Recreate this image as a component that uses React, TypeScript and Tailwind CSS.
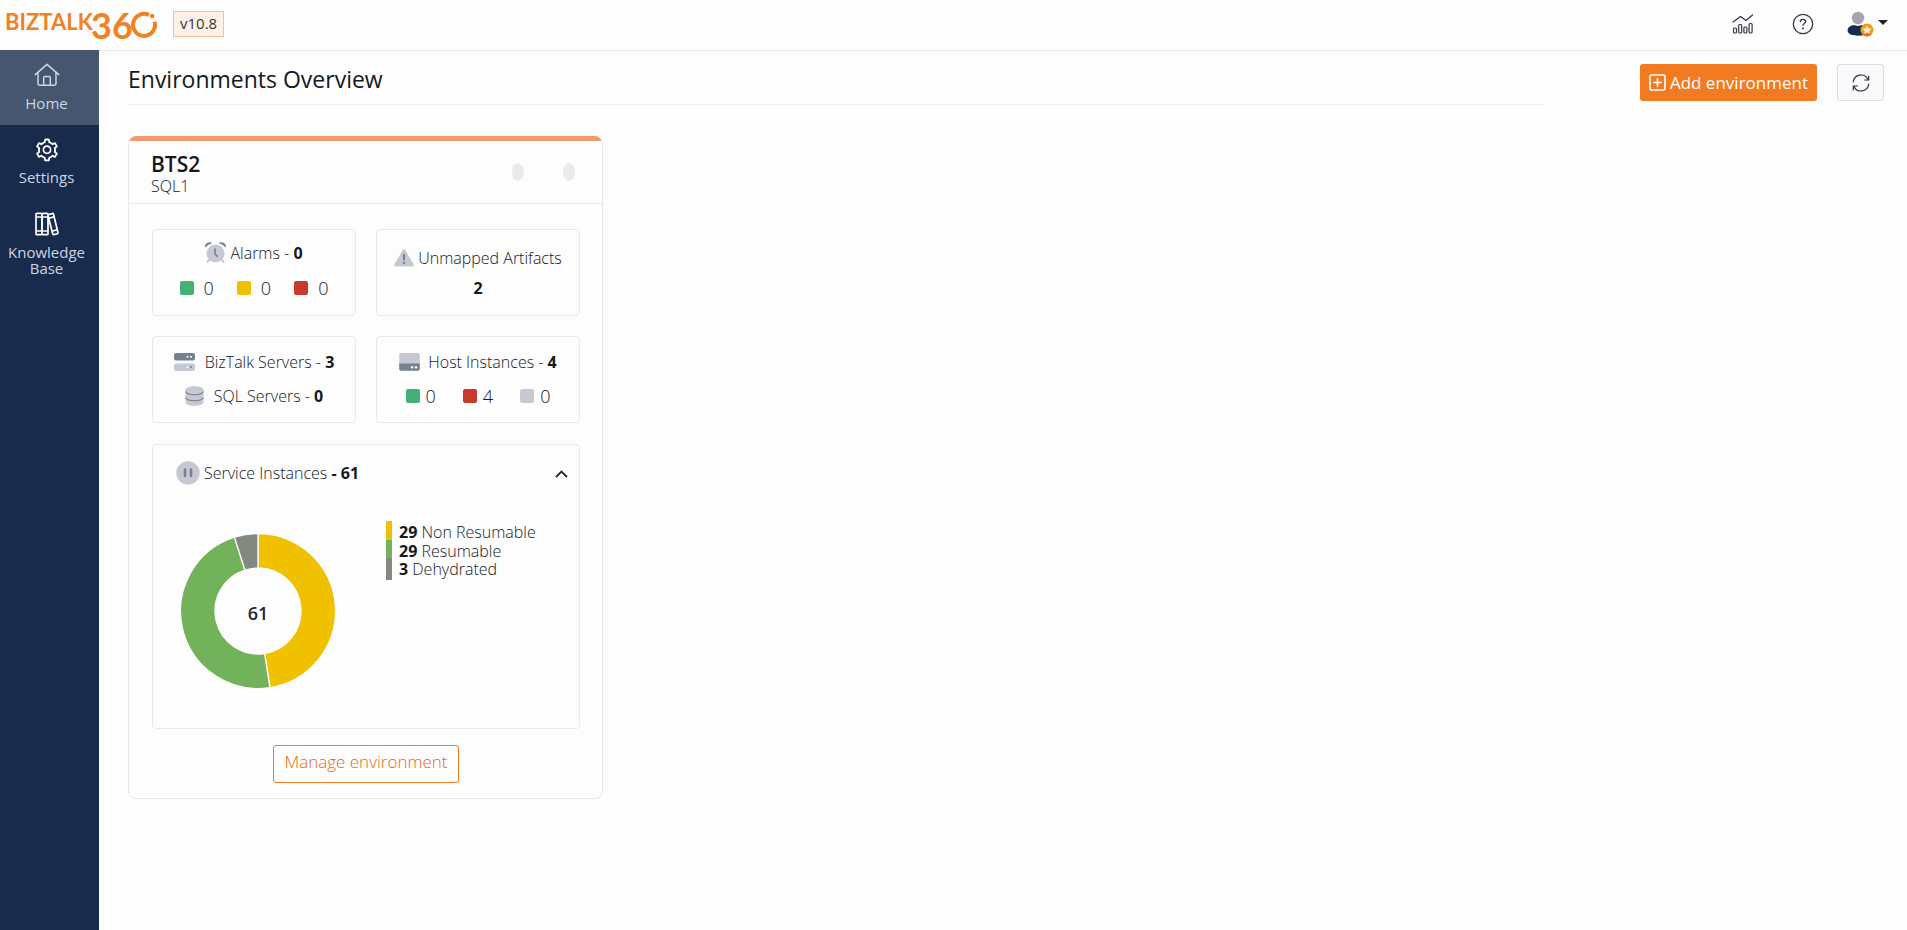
import React from "react";
import { AiOutlineSetting } from "react-icons/ai";

const DONUT = [
  { value: 29, label: "Non Resumable", color: "#efc100", bar: "h-[19px] bg-[#efc100]" },
  { value: 29, label: "Resumable", color: "#72b25a", bar: "h-[18px] bg-[#72b25a]" },
  { value: 3, label: "Dehydrated", color: "#838881", bar: "h-[22px] bg-[#838881]" },
];

function HomeIcon() {
  return (
    <svg width="26" height="24" viewBox="0 0 26 24" fill="none" stroke="currentColor" strokeWidth="1.5" strokeLinecap="round" strokeLinejoin="round" aria-hidden="true">
      <path d="M1.2 11.6 13 1.4l11.800 10.200" />
      <path d="M4 9.400V20.500a1.800 1.800 0 0 0 1.800 1.800h14.400a1.800 1.800 0 0 0 1.800-1.800V9.400" />
      <path d="M9.700 22v-7.500a1 1 0 0 1 1-1h4.600a1 1 0 0 1 1 1V22" />
    </svg>
  );
}

function BooksIcon() {
  return (
    <svg width="24" height="24" viewBox="0 0 24 24" fill="none" stroke="currentColor" strokeWidth="1.700" strokeLinejoin="round" aria-hidden="true">
      <rect x="1" y="1.300" width="6" height="21.400" rx="1" />
      <rect x="7" y="1.300" width="6" height="21.400" rx="1" />
      <path d="M1 5h12M1 19h12" />
      <path d="m13.500 2.600 4-1.100a.8.800 0 0 1 1 .6l4.500 18.600a.8.800 0 0 1-.6 1l-3.600.9a.8.800 0 0 1-1-.6L13 4M14.300 6.100l5-1.300M17 19.200l5.300-1.400" />
    </svg>
  );
}

function AnalyticsIcon() {
  return (
    <svg width="22" height="20" viewBox="0 0 22 20" fill="none" stroke="#2f3646" strokeWidth="1.200" strokeLinecap="round" strokeLinejoin="round" aria-hidden="true">
      <path d="m1 8 7.500-5.500 5.500 4L20.500 1" />
      <rect x="1.500" y="14" width="3" height="5" rx="1" />
      <rect x="6.700" y="10.500" width="3" height="8.500" rx="1" />
      <rect x="11.900" y="13" width="3" height="6" rx="1" />
      <rect x="17.100" y="9.500" width="3" height="9.500" rx="1" />
    </svg>
  );
}

function HelpIcon() {
  return (
    <svg width="22" height="22" viewBox="0 0 22 22" fill="none" stroke="#2f3646" strokeWidth="1.300" strokeLinecap="round" strokeLinejoin="round" aria-hidden="true">
      <circle cx="11" cy="11" r="9.700" />
      <path d="M8.300 8.700c0-1.500 1.200-2.400 2.700-2.400s2.700.9 2.700 2.300c0 1.900-2.700 1.900-2.700 3.700" />
      <path d="M11 15.200v.2" strokeWidth="1.800" />
    </svg>
  );
}

function UserIcon() {
  return (
    <svg width="28" height="26" viewBox="0 0 28 26" aria-hidden="true">
      <circle cx="11" cy="7" r="6.200" fill="#a3a6b0" />
      <path d="M.6 19.500c0-3.200 3.200-5.200 6.400-5.200 1.300 0 2.300.6 4 .6s2.700-.6 4-.6c3.200 0 6.400 2 6.400 5.200 0 3.600-4.600 5.200-10.400 5.200S.6 23.100.6 19.500Z" fill="#182d4e" />
      <circle cx="20" cy="19" r="6.500" fill="#f39a1c" />
      <path d="M15.400 23.600a6.500 6.500 0 0 0 9.200 0L20 19Z" fill="#ee6d2a" />
      <path d="m20 14.500 1.400 2.800 3.100.4-2.200 2.200.5 3.100-2.800-1.500-2.800 1.500.5-3.100-2.200-2.200 3.100-.4Z" fill="#fff3cf" />
    </svg>
  );
}

function RefreshIcon() {
  return (
    <svg width="18" height="18" viewBox="0 0 18 18" fill="none" stroke="#2f3646" strokeWidth="1.200" strokeLinecap="round" strokeLinejoin="round" aria-hidden="true">
      <path d="M1.300 8A7.700 7.700 0 0 1 16 5.600M16.700 10A7.700 7.700 0 0 1 2 12.400" />
      <path d="M16.700 2v4h-4M1.300 16v-4h4" />
    </svg>
  );
}

function PlusBoxIcon() {
  return (
    <svg width="17" height="17" viewBox="0 0 17 17" fill="none" stroke="currentColor" strokeWidth="1.600" strokeLinecap="round" aria-hidden="true">
      <rect x="1" y="1" width="15" height="15" rx="1.500" />
      <path d="M8.500 4.800v7.400M4.800 8.500h7.400" />
    </svg>
  );
}

function AlarmIcon() {
  return (
    <svg width="21" height="22" viewBox="0 0 21 22" aria-hidden="true">
      <path d="M.5 5C-.2 1.800 3 .1 6.500 1Q3 2.200.5 5ZM20.500 5C21.200 1.800 18 .1 14.500 1Q18 2.200 20.500 5Z" fill="#76808f" stroke="#76808f" strokeWidth=".8" strokeLinejoin="round" />
      <path d="m4.200 17.500-1.700 2.500M16.800 17.500l1.700 2.500" stroke="#c6c9d1" strokeWidth="2" strokeLinecap="round" />
      <circle cx="10.500" cy="11.500" r="9" fill="#c6c9d1" />
      <path d="M10 7v5l2.200 2.300" fill="none" stroke="#76808f" strokeWidth="1.600" strokeLinecap="round" />
    </svg>
  );
}

function WarningIcon() {
  return (
    <svg width="20" height="18" viewBox="0 0 20 18" aria-hidden="true">
      <path d="M8.700 1.100a1.500 1.500 0 0 1 2.600 0l8.300 14.300a1.400 1.400 0 0 1-1.200 2.100H1.600a1.400 1.400 0 0 1-1.200-2.100Z" fill="#c6c9d1" />
      <path d="M10 5.700v5" stroke="#76808f" strokeWidth="2" strokeLinecap="round" />
      <circle cx="10" cy="14" r="1.200" fill="#76808f" />
    </svg>
  );
}

function ServersIcon() {
  return (
    <svg width="21" height="18" viewBox="0 0 21 18" aria-hidden="true">
      <rect width="21" height="7.500" rx="2" fill="#76808f" />
      <rect y="10.500" width="21" height="7.500" rx="2" fill="#c6c9d1" />
      <circle cx="13.500" cy="3.800" r="1" fill="#fff" />
      <circle cx="17" cy="3.800" r="1" fill="#fff" />
      <circle cx="13.500" cy="14.200" r="1" fill="#fff" />
      <circle cx="17" cy="14.200" r="1" fill="#76808f" />
    </svg>
  );
}

function DatabaseIcon() {
  return (
    <svg width="19" height="20" viewBox="0 0 19 20" aria-hidden="true">
      <path d="M.5 3.800C.5 1.900 4.500.3 9.500.3s9 1.600 9 3.500v12.400c0 1.900-4 3.500-9 3.500s-9-1.600-9-3.500Z" fill="#c6c9d1" />
      <path d="M.5 5.500c1 2 4.500 3.200 9 3.200s8-1.200 9-3.200M.5 11.500c1 2 4.500 3.200 9 3.200s8-1.200 9-3.200" fill="none" stroke="#76808f" strokeWidth="1.100" />
    </svg>
  );
}

function HostIcon() {
  return (
    <svg width="21" height="18" viewBox="0 0 21 18" aria-hidden="true">
      <path d="M2 0h17a1.800 1.800 0 0 1 1.800 1.800V12H.2V1.800A1.800 1.800 0 0 1 2 0Z" fill="#c6c9d1" />
      <path d="M.2 10.500h20.600v5.500a1.800 1.800 0 0 1-1.800 1.800H2a1.800 1.800 0 0 1-1.800-1.800Z" fill="#76808f" />
      <circle cx="13" cy="14.200" r="1.200" fill="#fff" />
      <circle cx="17" cy="14.200" r="1.200" fill="#fff" />
    </svg>
  );
}

function PauseIcon() {
  return (
    <svg width="24" height="24" viewBox="0 0 24 24" aria-hidden="true">
      <circle cx="12" cy="12" r="11.700" fill="#c6c9d1" />
      <path d="M9 8.500v6.500M15 8.500v6.500" stroke="#76808f" strokeWidth="2.600" strokeLinecap="round" />
    </svg>
  );
}

function Logo() {
  return (
    <a href="#" aria-label="BizTalk360" className="flex h-7 items-start text-[#f08223]">
      <span className="w-[86px] text-[22px] leading-6 font-bold whitespace-nowrap font-['Lato',sans-serif]">BIZTALK</span>
      <span className="w-10 text-right text-[36px] leading-[30px] font-bold font-['Lato',sans-serif]">36</span>
      <svg width="27" height="28" viewBox="0 0 27 28" fill="none" aria-hidden="true">
        <path d="M18 5.100A11 11 0 1 0 23.500 11.600" stroke="currentColor" strokeWidth="4" />
        <circle cx="21.200" cy="6" r="2.300" fill="currentColor" />
      </svg>
    </a>
  );
}

function Donut() {
  const total = DONUT.reduce((sum, s) => sum + s.value, 0);
  let turned = 0;
  const point = (r: number, a: number) => `${(78 + r * Math.sin(a)).toFixed(2)} ${(78 - r * Math.cos(a)).toFixed(2)}`;
  return (
    <svg width="156" height="156" viewBox="0 0 156 156" role="img" aria-label="Service instances by state">
      {DONUT.map((s) => {
        const from = (turned / total) * 2 * Math.PI;
        turned += s.value;
        const to = (turned / total) * 2 * Math.PI;
        const d = `M${point(77.5, from)}A77.500 77.500 0 0 1 ${point(77.5, to)}L${point(43, to)}A43 43 0 0 0 ${point(43, from)}Z`;
        return <path key={s.label} d={d} fill={s.color} stroke="#fdfdfd" strokeWidth="1.300" />;
      })}
      <text x="78" y="87" textAnchor="middle" fontSize="18" fontWeight="600" fill="#25282e">
        {total}
      </text>
    </svg>
  );
}

const Swatch = ({ tone, value, gap }: { tone: string; value: number; gap: string }) => (
  <span className={`flex items-center ${gap}`}>
    <span className={`size-3.5 rounded-[2px] ${tone}`} />
    <span className="text-lg leading-6">{value}</span>
  </span>
);

const tile = "flex h-[87px] flex-col items-center rounded border border-[#e9e9eb]";

export default function App() {
  return (
    <div className="flex min-h-screen flex-col bg-[#fdfdfd] font-['Open_Sans',sans-serif] font-light text-[#16181d]">
      <header className="flex h-[51px] items-center border-b border-[#e6e6e8] pr-[19px] pb-0.5 pl-[5px]">
        <Logo />
        <span className="ml-[15px] flex h-[26px] items-center border border-[#f3c29d] bg-[#fdf1e7] px-1.5 pb-0.5 text-[15px] font-normal text-[#33363d]">v10.8</span>
        <div className="ml-auto flex items-center">
          <button aria-label="Analytics" className="mr-[38px]"><AnalyticsIcon /></button>
          <button aria-label="Help" className="mr-[33px]"><HelpIcon /></button>
          <button aria-label="Account" className="flex items-center gap-[3px]">
            <UserIcon />
            <svg width="10" height="5" viewBox="0 0 10 5" className="mb-1" aria-hidden="true"><path d="M0 0h10L5 5Z" fill="#222" /></svg>
          </button>
        </div>
      </header>

      <div className="flex flex-1">
        <nav className="-mt-px w-[99px] shrink-0 bg-[#182b4d] text-[15px] leading-4 font-normal text-[#cbd6e3]">
          <a href="#home" className="flex h-[75px] flex-col items-center gap-2 bg-[#46566f] pt-[13px] pr-1.5">
            <HomeIcon />
            Home
          </a>
          <a href="#settings" className="flex h-[75px] flex-col items-center gap-1.5 pt-3 pr-1.5">
            <AiOutlineSetting size={26} className="text-white" aria-hidden="true" />
            Settings
          </a>
          <a href="#kb" className="flex flex-col items-center gap-2 pt-3 pr-1.5 text-center">
            <span className="text-white"><BooksIcon /></span>
            <span className="flex flex-col"><span>Knowledge</span><span>Base</span></span>
          </a>
        </nav>

        <main className="flex-1 pt-[13px] pr-[23px] pl-[29px]">
          <div className="flex items-start">
            <h1 className="h-[41px] flex-1 border-b border-[#f0f0f1] text-[23px] leading-[30px] font-normal">Environments Overview</h1>
            <button className="ml-[95px] flex h-[37px] items-center gap-1 rounded-[3px] bg-[#f27a21] px-[9px] text-[17px] font-normal text-white">
              <PlusBoxIcon />
              Add environment
            </button>
            <button aria-label="Refresh" className="ml-5 flex h-[37px] w-[47px] items-center justify-center rounded-[3px] border border-[#dcdee2] bg-[#f9f9fc]">
              <RefreshIcon />
            </button>
          </div>

          <section className="mt-[31px] w-[475px] overflow-hidden rounded-lg border border-t-0 border-[#e9e9ec]">
            <div className="h-[5px] bg-[#f09c70]" />
            <div className="flex h-[63px] items-center justify-between border-b border-[#e6e6e9] pr-[27px] pl-[22px]">
              <div className="pt-1">
                <h2 className="text-[21px] leading-6 font-semibold">BTS2</h2>
                <p className="text-base leading-5">SQL1</p>
              </div>
              <div className="flex gap-[39px]">
                <span className="h-[18px] w-3 rounded-[50%] bg-[#e9eaeb]" />
                <span className="h-[18px] w-3 rounded-[50%] bg-[#e9eaeb]" />
              </div>
            </div>

            <div className="pt-[25px] pr-[22px] pb-[15px] pl-[23px] text-base leading-5">
              <div className="grid grid-cols-2 gap-5">
                <div className={`${tile} gap-3 pt-3`}>
                  <p className="flex items-center gap-1"><AlarmIcon /><span>Alarms - <b className="font-bold">0</b></span></p>
                  <div className="flex gap-[23px]">
                    <Swatch tone="bg-[#45b076]" value={0} gap="gap-2.5" />
                    <Swatch tone="bg-[#efc100]" value={0} gap="gap-2.5" />
                    <Swatch tone="bg-[#c83a2e]" value={0} gap="gap-2.5" />
                  </div>
                </div>
                <div className={`${tile} gap-2.5 pt-[18px]`}>
                  <p className="flex items-center gap-1"><WarningIcon />Unmapped Artifacts</p>
                  <b className="font-bold">2</b>
                </div>
                <div className={`${tile} gap-3.5 pt-[15px]`}>
                  <p className="flex items-center gap-2.5"><ServersIcon /><span>BizTalk Servers - <b className="font-bold">3</b></span></p>
                  <p className="flex items-center gap-2.5"><DatabaseIcon /><span>SQL Servers - <b className="font-bold">0</b></span></p>
                </div>
                <div className={`${tile} gap-3 pt-[15px]`}>
                  <p className="flex items-center gap-2"><HostIcon /><span>Host Instances - <b className="font-bold">4</b></span></p>
                  <div className="flex gap-[27px]">
                    <Swatch tone="bg-[#45b076]" value={0} gap="gap-1.5" />
                    <Swatch tone="bg-[#c83a2e]" value={4} gap="gap-1.5" />
                    <Swatch tone="bg-[#c6c9d1]" value={0} gap="gap-1.5" />
                  </div>
                </div>
              </div>

              <div className="mt-[21px] h-[285px] rounded border border-[#e9e9eb] pt-4 pr-[11px] pl-[23px]">
                <div className="flex items-center gap-1">
                  <PauseIcon />
                  <span>Service Instances <b className="font-bold">- 61</b></span>
                  <button aria-label="Collapse" className="ml-auto pt-0.5">
                    <svg width="13" height="8" viewBox="0 0 13 8" fill="none" stroke="#25282e" strokeWidth="1.800" aria-hidden="true"><path d="m1 7 5.500-5.500L12 7" /></svg>
                  </button>
                </div>
                <div className="mt-9 flex gap-[50px] pl-1">
                  <div className="mt-3"><Donut /></div>
                  <ul>
                    {DONUT.map((s) => (
                      <li key={s.label} className="flex items-start gap-[7px]">
                        <span className={`w-1.5 ${s.bar}`} />
                        <span className="h-[18px] pt-0.5 leading-[18px]"><b className="font-bold">{s.value}</b> {s.label}</span>
                      </li>
                    ))}
                  </ul>
                </div>
              </div>

              <div className="mt-4 flex justify-center">
                <button className="h-[38px] rounded-[3px] border border-[#f27a21] px-2.5 pb-1 text-[17px] text-[#e9690c]">Manage environment</button>
              </div>
            </div>
          </section>
        </main>
      </div>
    </div>
  );
}
